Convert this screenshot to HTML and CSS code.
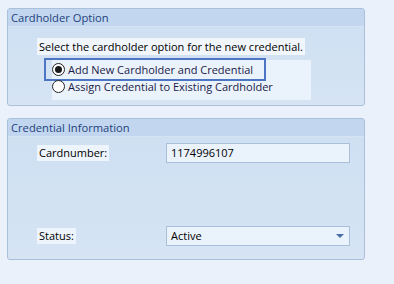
FILE: index.html
```html
<!DOCTYPE html>
<html lang="en">
<head>
  <meta charset="UTF-8">
  <title>Credential</title>
  <link rel="stylesheet" href="styles.css">
</head>
<body>
  <div id="page">
    <div class="panel panel-option">
      <div class="panel-head">Cardholder Option</div>
      <div class="panel-body">
        <div class="hint">Select the cardholder option for the new credential.</div>
        <div class="options">
          <label class="option focused"><span class="radio checked"></span>Add New Cardholder and Credential</label>
          <label class="option"><span class="radio"></span>Assign Credential to Existing Cardholder</label>
        </div>
      </div>
    </div>
    <div class="panel panel-info">
      <div class="panel-head">Credential Information</div>
      <div class="panel-body">
        <div class="field">
          <span class="field-label">Cardnumber:</span>
          <div class="box">1174996107</div>
        </div>
        <div class="field field-status">
          <span class="field-label">Status:</span>
          <div class="box combo">Active<span class="arrow"></span></div>
        </div>
      </div>
    </div>
  </div>
</body>
</html>
```

FILE: styles.css
```css
* {
  box-sizing: border-box;
  font-family: "Open Sans", "Noto Sans", Arial, sans-serif;
}
html, body {
  margin: 0;
  width: 100%;
  height: 100%;
}
body {
  background: #eaf1fb;
  font-size: 11px;
  color: #000;
}
#page {
  padding: 8px 0 0 7px;
  width: 365px;
}
.panel {
  border: 1px solid #a9bfda;
  border-radius: 3px;
  background: linear-gradient(#cddff2, #d6e4f4);
  overflow: hidden;
}
.panel-option {
  height: 98px;
}
.panel-info {
  margin-top: 12px;
  height: 142px;
}
.panel-head {
  height: 18px;
  line-height: 17px;
  padding-left: 3px;
  background: #c2d7ef;
  border-bottom: 1px solid #d6e3f3;
  color: #1e3f7c;
  font-size: 11.2px;
}
.panel-body {
  padding: 11px 0 0 29px;
}
.hint {
  display: inline-block;
  background: #f1f6fc;
  padding: 0 2px;
  height: 17px;
  line-height: 17px;
}
.options {
  margin: 5px 0 0 15px;
  width: 259px;
  height: 40px;
  background: #eaf2fb;
  padding-top: 1px;
}
.option {
  position: relative;
  display: flex;
  align-items: center;
  height: 17px;
  color: #1b1b48;
}
.option.focused::before {
  content: "";
  position: absolute;
  left: -8px;
  top: -3px;
  width: 218px;
  height: 19px;
  border: 2px solid #4c75c4;
}
.radio {
  width: 13px;
  height: 13px;
  border: 1px solid #222;
  border-radius: 50%;
  background: #fff;
  margin-right: 3px;
  display: flex;
  align-items: center;
  justify-content: center;
}
.radio.checked::after {
  content: "";
  width: 7px;
  height: 7px;
  border-radius: 50%;
  background: #1a1a1a;
}
.field {
  display: flex;
  align-items: center;
  justify-content: space-between;
  width: 313px;
}
.panel-info .panel-body {
  padding-top: 6px;
}
.field-status {
  margin-top: 63px;
}
.field-label {
  background: #eef4fb;
  padding: 0 2px;
  height: 16px;
  line-height: 16px;
}
.box {
  width: 184px;
  height: 20px;
  line-height: 18px;
  border: 1px solid #a9bfda;
  background: #eaf2fb;
  padding-left: 4px;
}
.combo {
  display: flex;
  align-items: center;
  justify-content: space-between;
  padding-right: 5px;
}
.arrow {
  width: 0;
  height: 0;
  border-left: 4px solid transparent;
  border-right: 4px solid transparent;
  border-top: 4px solid #4a6fa8;
}
```
